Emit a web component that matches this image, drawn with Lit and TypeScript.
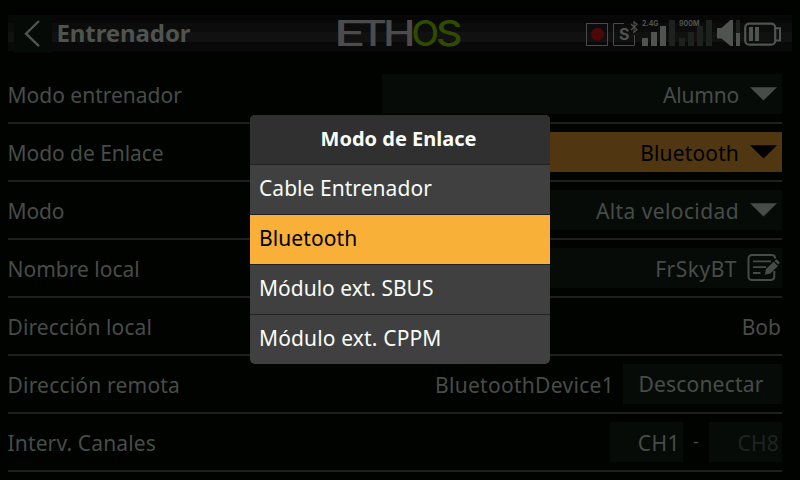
import { LitElement, html, css, svg, nothing } from "lit";
import { customElement } from "lit/decorators.js";
import { classMap } from "lit/directives/class-map.js";

const arrow = html`<svg class="arrow" width="27" height="14" viewBox="0 0 27 14"><path d="M0 0.3H27L13.5 13.5Z" fill="currentColor"/></svg>`;

const edit = html`<svg class="edit" width="34" height="30" viewBox="0 0 34 30" fill="none" stroke="currentColor">
  <path d="M28 5.5V5A3 3 0 0 0 25 2H5A3.5 3.5 0 0 0 1.5 5.5V23.5A3.5 3.5 0 0 0 5 27H24A3.5 3.5 0 0 0 27.3 23.5V18" stroke-width="2"/>
  <path d="M6 8.3H24M6 14.2H19M6 20H13.5" stroke-width="1.8"/>
  <path d="M17.8 21.8L19 16L26.5 8.7L31 13L23.4 20.6Z" fill="currentColor" stroke="none"/>
  <path d="M27.5 8L29.4 6.2L32.8 9.6L31.4 11.6Z" fill="currentColor" stroke="none"/>
</svg>`;

@customElement("status-header")
class StatusHeader extends LitElement {
  static styles = css`
    :host { display: block; margin: 8px 8px 0; height: 50px; letter-spacing: 0; }
    .bar {
      height: 50px; display: flex; align-items: center; position: relative;
      background: linear-gradient(#000100 0 7px, #060706 7px 15px, #0b0c0b 15px 24px, #101110 24px 34px, #080908 34px 43px, #010201 43px);
    }
    .back { width: 38px; height: 38px; margin-left: 6px; margin-top: 1px; background: #060a07; flex: none; }
    .back svg, .logo, .status { display: block; }
    .title {
      margin-left: 4.5px; flex: 1; font: bold 24px/32px "Noto Sans", sans-serif; letter-spacing: -0.1px; color: #505450;
    }
    .logo { position: absolute; left: 322px; top: 2px; }
    .status { flex: none; margin-right: 7px; }
    .status text, .logo text { font-family: Inter, "Liberation Sans", sans-serif; }
    .logo text { font-size: 34.8px; font-weight: 500; }
    .gray { fill: #4c4c4c; }
    .green { fill: #2e4b00; font-weight: 600; }
  `;
  render() {
    const bars = (x: number, lit: number) =>
      [8, 14, 20, 26].map((h, i) => svg`<rect x=${x + i * 9} y=${46 - h} width="6" height=${h} fill=${i < lit ? "#505450" : "#1e221f"}/>`);
    return html`<div class="bar">
      <div class="back"><svg width="38" height="38" viewBox="0 0 38 38"><path d="M25 6L12 18.7L25 31.2" fill="none" stroke="#505450" stroke-width="2.4"/></svg></div>
      <div class="title">Entrenador</div>
      <svg class="logo" width="142" height="46" viewBox="330 10 142 46">
        <text class="gray" x="334" y="46" textLength="31.5" lengthAdjust="spacingAndGlyphs">E</text>
        <text class="gray" x="359" y="46" textLength="28" lengthAdjust="spacingAndGlyphs">T</text>
        <text class="gray" x="383" y="46" textLength="32.5" lengthAdjust="spacingAndGlyphs">H</text>
        <text class="green" x="411.5" y="46" textLength="27.5" lengthAdjust="spacingAndGlyphs">O</text>
        <text class="green" x="436" y="46" textLength="26.5" lengthAdjust="spacingAndGlyphs">S</text>
      </svg>
      <svg class="status" width="200" height="50" viewBox="585 8 200 50">
        <rect x="586.5" y="23.5" width="21" height="22" fill="none" stroke="#484c49"/>
        <circle cx="597.5" cy="34.3" r="6.5" fill="#4d0808"/>
        <path d="M624 23.5H613.5V45.5H634.5V35" fill="none" stroke="#484c49"/>
        <text x="619" y="40" font-size="16" font-weight="700" fill="#505450">S</text>
        <path d="M631 24L637 29.7L634 32.3V21.7L637 24.3L631 30" fill="none" stroke="#505450" stroke-width="1.1"/>
        ${bars(642, 3)}${bars(679, 0)}
        <text x="642" y="25.8" font-size="7.5" font-weight="700" textLength="16.5" lengthAdjust="spacingAndGlyphs" fill="#505450">2.4G</text>
        <text x="679" y="25.8" font-size="7.5" font-weight="700" textLength="20.5" lengthAdjust="spacingAndGlyphs" fill="#505450">900M</text>
        <path d="M717 28H721.5L730.5 20H733V46H730.5L721.5 38.5H717Z" fill="#505450"/>
        <rect x="736" y="20" width="4" height="13" fill="#1e221f"/>
        <rect x="736" y="33" width="4" height="13" fill="#505450"/>
        <rect x="745.2" y="23.7" width="30" height="21" rx="4" fill="none" stroke="#505450" stroke-width="2.2"/>
        <path d="M776 28.3H780V40.5H776" fill="none" stroke="#505450" stroke-width="2"/>
        <rect x="749" y="27" width="4" height="14" fill="#505450"/>
        <rect x="755" y="27" width="4" height="14" fill="#505450"/>
      </svg>
    </div>`;
  }
}

interface Row { label: string; track: number; value: string; valueTrack: number; kind: "select" | "edit" | "text" | "button" | "range"; focus?: boolean; }

const rows: Row[] = [
  { label: "Modo entrenador", track: 0, value: "Alumno", valueTrack: -0.2, kind: "select" },
  { label: "Modo de Enlace", track: -0.05, value: "Bluetooth", valueTrack: 0.15, kind: "select", focus: true },
  { label: "Modo", track: -0.1, value: "Alta velocidad", valueTrack: 0.4, kind: "select" },
  { label: "Nombre local", track: 0, value: "FrSkyBT", valueTrack: 0.5, kind: "edit" },
  { label: "Dirección local", track: 0.1, value: "Bob", valueTrack: 0, kind: "text" },
  { label: "Dirección remota", track: 0.2, value: "BluetoothDevice1", valueTrack: 0.3, kind: "button" },
  { label: "Interv. Canales", track: 0.15, value: "CH1", valueTrack: 0.5, kind: "range" },
];

const options = [
  { text: "Cable Entrenador", track: 0.05 },
  { text: "Bluetooth", track: 0.1 },
  { text: "Módulo ext. SBUS", track: 0 },
  { text: "Módulo ext. CPPM", track: 0.15 },
];

@customElement("app-root")
class AppRoot extends LitElement {
  static styles = css`
    :host {
      display: block; position: relative; width: 800px; height: 480px; overflow: hidden; background: #000300;
      font: 21px/28px "Noto Sans", sans-serif; letter-spacing: 0.2px; color: #484c49; white-space: nowrap;
    }
    .rows { margin: 8px 18px 0 8px; }
    .row { height: 56px; border-bottom: 2px solid #1d201e; display: flex; align-items: center; }
    .label { flex: 1; margin-left: -0.5px; padding-top: 2px; }
    .field { box-sizing: border-box; height: 40px; background: #070b08; display: flex; align-items: center; justify-content: flex-end; padding-top: 2px; }
    .wide { width: 400px; }
    .focus { background: #503711; color: #000; }
    .arrow { display: block; flex: none; margin: -2px 5px 0 11px; }
    .edit { display: block; flex: none; margin: -2px 1px 0 10px; }
    .plain { padding-top: 2px; }
    .end { margin-right: 1px; }
    .button { width: 159px; margin-left: 9px; justify-content: center; padding-top: 0; padding-right: 3px; }
    .channel { width: 73px; padding-right: 3px; }
    .dash { width: 26px; text-align: center; font-size: 18px; padding-bottom: 2px; }
    .off { color: #1f2320; }
    .menu {
      position: absolute; left: 250px; top: 115px; width: 300px; border-radius: 5px; overflow: hidden;
      background: #404040; color: #f8fcf8;
    }
    .menu div { box-sizing: border-box; height: 50px; border-bottom: 1px solid #202220; padding: 9px 9px 0; }
    .menu .head { background: #303030; font-size: 20px; font-weight: bold; text-align: center; letter-spacing: 0; padding: 10px 11px 0 8px; }
    .menu .chosen { background: #f8b038; color: #000; }
    .menu div:last-child { height: 49px; border-bottom: none; }
  `;

  value(r: Row) {
    const text = html`<span style="letter-spacing:${r.valueTrack}px">${r.value}</span>`;
    switch (r.kind) {
      case "select":
        return html`<div class=${classMap({ field: true, wide: true, focus: !!r.focus })}>${text}${arrow}</div>`;
      case "edit":
        return html`<div class="field wide">${text}${edit}</div>`;
      case "text":
        return html`<div class="plain end">${text}</div>`;
      case "button":
        return html`<div class="plain">${text}</div><div class="field button">Desconectar</div>`;
      case "range":
        return html`<div class="field channel">${text}</div><span class="dash">-</span><div class="field channel off">CH8</div>`;
      default:
        return nothing;
    }
  }

  render() {
    return html`
      <status-header></status-header>
      <div class="rows">${rows.map((r) => html`<div class="row"><span class="label" style="letter-spacing:${r.track}px">${r.label}</span>${this.value(r)}</div>`)}</div>
      <div class="menu">
        <div class="head">Modo de Enlace</div>
        ${options.map((o, i) => html`<div class=${classMap({ chosen: i === 1 })} style="letter-spacing:${o.track}px">${o.text}</div>`)}
      </div>`;
  }
}
